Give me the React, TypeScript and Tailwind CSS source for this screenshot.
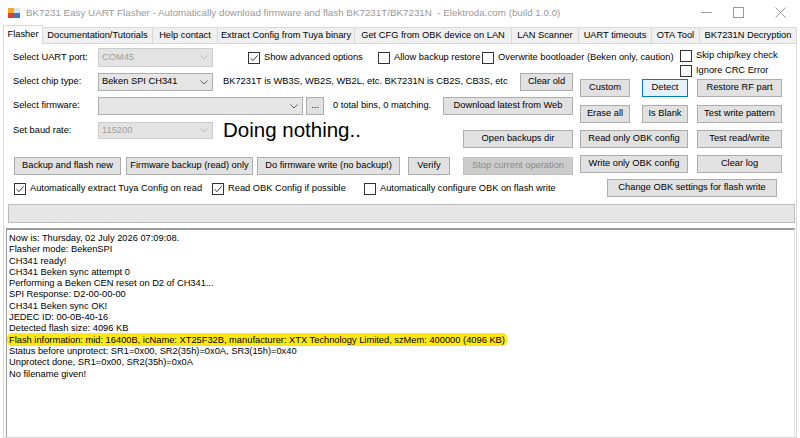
import React from "react";

type BtnProps = {
  children: React.ReactNode;
  className?: string;
  variant?: "normal" | "focus" | "disabled";
};

function Btn({ children, className = "", variant = "normal" }: BtnProps) {
  const v =
    variant === "disabled"
      ? "bg-[#cccccc] border-[#bfbfbf] text-[#8a8a8a]"
      : variant === "focus"
      ? "bg-[#e5f1fb] border-[#0078d7] text-black"
      : "bg-[#e1e1e1] border-[#adadad] text-black";
  return (
    <div
      className={`flex items-center justify-center border whitespace-nowrap shrink-0 h-[18px] ${v} ${className}`}
    >
      {children}
    </div>
  );
}

function Check({
  label,
  checked = false,
  className = "",
}: {
  label: string;
  checked?: boolean;
  className?: string;
}) {
  return (
    <div className={`flex items-center shrink-0 whitespace-nowrap ${className}`}>
      <div className="w-[12px] h-[12px] border border-[#333333] bg-white flex items-center justify-center shrink-0">
        {checked && (
          <svg width="10" height="10" viewBox="0 0 10 10">
            <path d="M1.5 5.2 L4 7.6 L8.6 2.4" stroke="#333333" strokeWidth="1" fill="none" />
          </svg>
        )}
      </div>
      <span className="ml-[4px]">{label}</span>
    </div>
  );
}

function Chevron({ color }: { color: string }) {
  return (
    <svg width="8" height="5" viewBox="0 0 8 5" className="shrink-0">
      <path d="M0.5 0.5 L4 4 L7.5 0.5" stroke={color} strokeWidth="1" fill="none" />
    </svg>
  );
}

function Combo({
  value = "",
  className = "",
  disabled = false,
}: {
  value?: string;
  className?: string;
  disabled?: boolean;
}) {
  const v = disabled
    ? "bg-[#e3e3e3] border-[#cccccc] text-[#a0a0a0]"
    : "bg-[#e5e5e5] border-[#adadad] text-black";
  return (
    <div className={`flex items-center border shrink-0 pl-[3px] pr-[4px] ${v} ${className}`}>
      <span className="flex-1 whitespace-nowrap">{value}</span>
      <Chevron color={disabled ? "#bdbdbd" : "#606060"} />
    </div>
  );
}

function AppIcon() {
  return (
    <svg width="12" height="12" viewBox="0 0 12 12" className="shrink-0">
      <rect x="0" y="1" width="6" height="5" fill="#f5a623" />
      <rect x="6" y="1" width="6" height="5" fill="#d8e6f5" />
      <rect x="0" y="6" width="6" height="5" fill="#e0412c" />
      <rect x="6" y="6" width="6" height="5" fill="#3a76c4" />
    </svg>
  );
}

const tabs: { name: string; w: string }[] = [
  { name: "Documentation/Tutorials", w: "w-[110px]" },
  { name: "Help contact", w: "w-[65px]" },
  { name: "Extract Config from Tuya binary", w: "w-[137px]" },
  { name: "Get CFG from OBK device on LAN", w: "w-[157px]" },
  { name: "LAN Scanner", w: "w-[67px]" },
  { name: "UART timeouts", w: "w-[73px]" },
  { name: "OTA Tool", w: "w-[48px]" },
  { name: "BK7231N Decryption", w: "w-[97px]" },
];

const logLines = [
  "Now is: Thursday, 02 July 2026 07:09:08.",
  "Flasher mode: BekenSPI",
  "CH341 ready!",
  "CH341 Beken sync attempt 0",
  "Performing a Beken CEN reset on D2 of CH341...",
  "SPI Response: D2-00-00-00",
  "CH341 Beken sync OK!",
  "JEDEC ID: 00-0B-40-16",
  "Detected flash size: 4096 KB",
  "Flash information: mid: 16400B, icName: XT25F32B, manufacturer: XTX Technology Limited, szMem: 400000 (4096 KB)",
  "Status before unprotect: SR1=0x00, SR2(35h)=0x0A, SR3(15h)=0x40",
  "Unprotect done, SR1=0x00, SR2(35h)=0x0A",
  "No filename given!",
];

export default function App() {
  return (
    <div className="w-[800px] h-[438px] overflow-hidden bg-white font-['Liberation_Sans',Arial,sans-serif] text-[9.3px] leading-none text-black">
      {/* Title bar */}
      <div className="flex items-center h-[25px]">
        <div className="ml-[8px]">
          <AppIcon />
        </div>
        <span className="ml-[6px] text-[9.8px] text-[#999999] whitespace-pre">
          BK7231 Easy UART Flasher - Automatically download firmware and flash BK7231T/BK7231N  - Elektroda.com (build 1.0.0)
        </span>
        <div className="ml-auto flex items-center mr-[14px]">
          <svg width="11" height="11" viewBox="0 0 11 11">
            <path d="M0 5.5 H11" stroke="#9a9a9a" strokeWidth="1" />
          </svg>
          <svg width="11" height="11" viewBox="0 0 11 11" className="ml-[21px]">
            <rect x="0.5" y="0.5" width="10" height="10" stroke="#9a9a9a" strokeWidth="1" fill="none" />
          </svg>
          <svg width="11" height="11" viewBox="0 0 11 11" className="ml-[31px]">
            <path d="M0.5 0.5 L10.5 10.5 M10.5 0.5 L0.5 10.5" stroke="#9a9a9a" strokeWidth="1" />
          </svg>
        </div>
      </div>

      {/* Tabs */}
      <div className="flex items-end h-[19px] pl-[3px]">
        <div className="w-[40px] h-[19px] bg-white border border-b-0 border-[#d9d9d9] flex items-center justify-center">
          Flasher
        </div>
        {tabs.map((t) => (
          <div
            key={t.name}
            className={`${t.w} h-[17px] bg-[#f0f0f0] border border-l-0 border-[#d9d9d9] flex items-center justify-center whitespace-nowrap shrink-0`}
          >
            {t.name}
          </div>
        ))}
      </div>

      {/* Tab page */}
      <div className="mx-[3px] h-[394px] border border-t-0 border-[#d9d9d9] flex flex-col">
        {/* Upper area */}
        <div className="flex mt-[4px]">
          {/* Left column */}
          <div className="ml-[9px] w-[567px] shrink-0 flex flex-col">
            {/* Row 1 */}
            <div className="flex items-center h-[19px] whitespace-nowrap">
              <span className="w-[85px] shrink-0">Select UART port:</span>
              <Combo value="COM45" disabled className="w-[115px] h-[19px]" />
              <Check checked label="Show advanced options" className="ml-[35px] w-[130px]" />
              <Check label="Allow backup restore" className="w-[104px]" />
              <Check label="Overwrite bootloader (Beken only, caution)" className="w-[198px]" />
            </div>
            {/* Row 2 */}
            <div className="flex items-center h-[18px] mt-[6px] whitespace-nowrap">
              <span className="w-[85px] shrink-0">Select chip type:</span>
              <Combo value="Beken SPI CH341" className="w-[115px] h-[18px]" />
              <span className="ml-[10px] w-[297px] shrink-0">
                BK7231T is WB3S, WB2S, WB2L, etc. BK7231N is CB2S, CB3S, etc
              </span>
              <Btn className="w-[53px]">Clear old</Btn>
            </div>
            {/* Row 3 */}
            <div className="flex items-center h-[18px] mt-[6px] whitespace-nowrap">
              <span className="w-[85px] shrink-0">Select firmware:</span>
              <Combo className="w-[205px] h-[18px]" />
              <Btn className="ml-[3px] w-[18px] text-[#555555]">...</Btn>
              <span className="ml-[9px] w-[110px] shrink-0">0 total bins, 0 matching.</span>
              <Btn className="w-[130px]">Download latest from Web</Btn>
            </div>
            {/* Row 4 */}
            <div className="flex items-start h-[26px] mt-[7px] whitespace-nowrap">
              <span className="w-[85px] shrink-0 h-[17px] flex items-center">Set baud rate:</span>
              <Combo value="115200" disabled className="w-[115px] h-[17px]" />
              <span className="ml-[10px] w-[240px] shrink-0 h-[17px] flex items-center text-[20.5px]">
                Doing nothing..
              </span>
              <Btn className="mt-[8px] w-[110px]">Open backups dir</Btn>
            </div>
            {/* Row 5 */}
            <div className="flex items-center h-[18px] mt-[9px] whitespace-nowrap">
              <Btn className="ml-[1px] w-[107px]">Backup and flash new</Btn>
              <Btn className="ml-[5px] w-[127px]">Firmware backup (read) only</Btn>
              <Btn className="ml-[4px] w-[143px]">Do firmware write (no backup!)</Btn>
              <Btn className="ml-[8px] w-[42px]">Verify</Btn>
              <Btn variant="disabled" className="ml-[13px] w-[110px]">
                Stop current operation
              </Btn>
            </div>
            {/* Row 6 */}
            <div className="flex items-center h-[13px] mt-[7px] whitespace-nowrap">
              <Check checked label="Automatically extract Tuya Config on read" className="ml-[1px] w-[198px]" />
              <Check checked label="Read OBK Config if possible" className="w-[152px]" />
              <Check label="Automatically configure OBK on flash write" />
            </div>
          </div>

          {/* Right column */}
          <div className="w-[203px] shrink-0 flex flex-col">
            <Check label="Skip chip/key check" className="ml-[100px] mt-[2px] h-[12px]" />
            <Check label="Ignore CRC Error" className="ml-[100px] mt-[3px] h-[12px]" />
            <div className="flex mt-[2px]">
              <Btn className="w-[50px]">Custom</Btn>
              <Btn variant="focus" className="ml-[12px] w-[46px]">
                Detect
              </Btn>
              <Btn className="ml-[9px] w-[85px]">Restore RF part</Btn>
            </div>
            <div className="flex mt-[8px]">
              <Btn className="w-[50px]">Erase all</Btn>
              <Btn className="ml-[12px] w-[46px]">Is Blank</Btn>
              <Btn className="ml-[9px] w-[85px]">Test write pattern</Btn>
            </div>
            <div className="flex mt-[7px]">
              <Btn className="w-[108px]">Read only OBK config</Btn>
              <Btn className="ml-[9px] w-[85px]">Test read/write</Btn>
            </div>
            <div className="flex mt-[7px]">
              <Btn className="w-[108px]">Write only OBK config</Btn>
              <Btn className="ml-[9px] w-[85px]">Clear log</Btn>
            </div>
            <div className="flex mt-[6px]">
              <Btn className="ml-[27px] w-[170px]">Change OBK settings for flash write</Btn>
            </div>
          </div>
        </div>

        {/* Progress bar */}
        <div className="ml-[4px] mt-[7px] w-[787px] h-[19px] bg-[#e6e6e6] border border-[#bcbcbc] shrink-0" />

        {/* Log */}
        <div className="ml-[2px] mt-[5px] w-[789px] flex-1 bg-white border-t-2 border-l border-r border-t-[#9a9a9a] border-l-[#9a9a9a] border-r-[#e3e3e3] pl-[2px] pt-[3px]">
          {logLines.map((l, i) =>
            i === 9 ? (
              <div key={i} className="h-[11.3px] leading-[11.3px] whitespace-nowrap">
                <span className="bg-[#ffe812] rounded-[5px] -ml-[2px] px-[2px] py-[1.5px]">{l}</span>
              </div>
            ) : (
              <div key={i} className="h-[11.3px] leading-[11.3px] whitespace-nowrap">
                {l}
              </div>
            )
          )}
        </div>
      </div>
    </div>
  );
}
